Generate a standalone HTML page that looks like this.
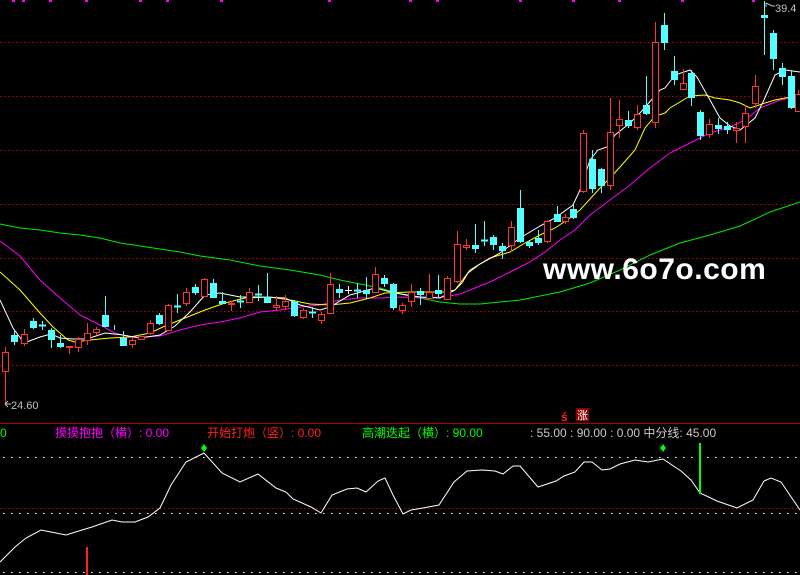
<!DOCTYPE html>
<html><head><meta charset="utf-8"><style>
html,body{margin:0;padding:0;background:#000;width:800px;height:575px;overflow:hidden}
svg{position:absolute;left:0;top:0}
.t{font-family:"Liberation Sans","Noto Sans CJK SC",sans-serif;font-size:12px}
</style></head><body>
<svg width="800" height="575" viewBox="0 0 800 575">
<g stroke="#c00000" stroke-width="1" stroke-dasharray="1.5 2.5">
<line x1="0" y1="42.5" x2="800" y2="42.5"/><line x1="0" y1="96.5" x2="800" y2="96.5"/>
<line x1="0" y1="150.5" x2="800" y2="150.5"/><line x1="0" y1="204.5" x2="800" y2="204.5"/>
<line x1="0" y1="258.5" x2="800" y2="258.5"/><line x1="0" y1="311.5" x2="800" y2="311.5"/>
<line x1="0" y1="365.5" x2="800" y2="365.5"/>
<line x1="0" y1="508.5" x2="800" y2="508.5"/>
</g>
<g stroke="#fff" stroke-width="1" stroke-dasharray="1.5 6.5">
<line x1="3" y1="457.5" x2="800" y2="457.5"/><line x1="3" y1="513.5" x2="800" y2="513.5"/><line x1="3" y1="572.5" x2="800" y2="572.5"/>
</g>
<line x1="0" y1="423.5" x2="800" y2="423.5" stroke="#b00000"/>
<g fill="#f0f">
<rect x="12" y="0" width="3" height="2"/><rect x="22" y="0" width="3" height="2"/><rect x="49" y="0" width="3" height="2"/><rect x="85" y="0" width="3" height="2"/><rect x="139" y="0" width="3" height="2"/><rect x="166" y="0" width="3" height="2"/><rect x="220" y="0" width="3" height="2"/><rect x="328" y="0" width="3" height="2"/><rect x="409" y="0" width="3" height="2"/><rect x="436" y="0" width="3" height="2"/><rect x="519" y="0" width="3" height="2"/><rect x="572" y="0" width="3" height="2"/><rect x="618" y="0" width="3" height="2"/><rect x="681" y="0" width="3" height="2"/><rect x="752" y="0" width="3" height="2"/>
</g>
<g fill="none" stroke-width="1">
<polyline stroke="#00ee00" points="0,224 20,228 40,230 60,233 80,235 100,238 120,243 140,246 160,249 180,252 200,256 230,260 260,266 290,270 320,275 340,280 360,284 380,288 400,294 420,298 440,302 460,304 480,304 520,300 560,292 590,283 620,270 650,255 680,243 710,235 740,226 770,212 800,202"/>
<polyline stroke="#ff00ff" points="0,241 20,256 40,280 60,298 80,315 100,325 115,333 130,337 145,337 160,336 180,330 200,325 220,322 240,318 260,312 280,310 300,307 320,305 340,300 360,298 380,298 400,297 420,298 445,297 460,294 470,290 490,282 510,272 530,262 545,252 560,240 575,230 590,215 610,200 630,185 650,168 670,153 690,143 710,133 730,127 745,120 760,108 780,100 800,96"/>
<polyline stroke="#ffff00" points="0,272 20,290 40,313 53,327 68,340 75,342 90,340 110,338 130,337 150,333 165,326 185,318 205,310 225,303 245,298 270,297 290,300 310,304 330,305 350,303 370,298 385,293 410,292 445,292 455,290 470,270 490,258 510,252 525,243 540,235 555,228 570,218 580,210 600,188 610,178 620,167 635,150 645,128 655,116 665,113 670,108 690,96 705,95 715,98 730,100 740,103 750,108 765,103 775,100 785,98 800,95"/>
<polyline stroke="#ffffff" points="0,300 13,328 24,343 40,337 51,334 60,338 73,339 87,339 105,333 123,335 140,338 160,335 175,326 190,312 205,295 220,293 240,297 260,297 285,298 300,305 320,310 330,307 350,295 375,288 395,293 420,297 440,298 455,290 462,283 468,273 480,264 500,253 520,238 540,226 555,218 573,205 580,190 590,160 598,150 607,147 615,135 630,123 640,113 660,90 665,88 675,75 690,70 697,77 710,100 720,118 730,126 740,130 755,118 763,102 775,75 785,70 800,72"/>
</g>
<g stroke-width="1">
<g stroke="#ff3333" fill="#000">
<line x1="5.5" y1="347" x2="5.5" y2="405"/><rect x="2.5" y="352.5" width="6" height="19"/>
<line x1="24.5" y1="329" x2="24.5" y2="346"/><rect x="21.5" y="334.5" width="6" height="9"/>
<line x1="69.5" y1="346" x2="69.5" y2="354"/><rect x="66.5" y="346.5" width="6" height="1"/>
<line x1="78.5" y1="337" x2="78.5" y2="352"/><rect x="75.5" y="339.5" width="6" height="8"/>
<line x1="87.5" y1="323" x2="87.5" y2="345"/><rect x="84.5" y="333.5" width="6" height="7"/>
<line x1="96.5" y1="327" x2="96.5" y2="335"/><rect x="93.5" y="329.5" width="6" height="3"/>
<line x1="132.5" y1="337" x2="132.5" y2="348"/><rect x="129.5" y="340.5" width="6" height="4"/>
<line x1="141.5" y1="336" x2="141.5" y2="340"/><rect x="138.5" y="336.5" width="6" height="3"/>
<line x1="150.5" y1="320" x2="150.5" y2="335"/><rect x="147.5" y="323.5" width="6" height="10"/>
<line x1="168.5" y1="304" x2="168.5" y2="331"/><rect x="165.5" y="305.5" width="6" height="25"/>
<line x1="186.5" y1="288" x2="186.5" y2="306"/><rect x="183.5" y="292.5" width="6" height="11"/>
<line x1="204.5" y1="278" x2="204.5" y2="297"/><rect x="201.5" y="279.5" width="6" height="17"/>
<line x1="231.5" y1="301" x2="231.5" y2="311"/><rect x="228.5" y="303.5" width="6" height="1"/>
<line x1="249.5" y1="288" x2="249.5" y2="303"/><rect x="246.5" y="292.5" width="6" height="10"/>
<line x1="276.5" y1="296" x2="276.5" y2="310"/><rect x="273.5" y="305.5" width="6" height="2"/>
<line x1="285.5" y1="295" x2="285.5" y2="310"/><rect x="282.5" y="301.5" width="6" height="5"/>
<line x1="303.5" y1="308" x2="303.5" y2="319"/><rect x="300.5" y="310.5" width="6" height="7"/>
<line x1="321.5" y1="312" x2="321.5" y2="324"/><rect x="318.5" y="314.5" width="6" height="6"/>
<line x1="330.5" y1="273" x2="330.5" y2="314"/><rect x="327.5" y="284.5" width="6" height="29"/>
<line x1="375.5" y1="267" x2="375.5" y2="293"/><rect x="372.5" y="274.5" width="6" height="18"/>
<line x1="402.5" y1="303" x2="402.5" y2="314"/><rect x="399.5" y="305.5" width="6" height="5"/>
<line x1="411.5" y1="284" x2="411.5" y2="307"/><rect x="408.5" y="292.5" width="6" height="9"/>
<line x1="429.5" y1="274" x2="429.5" y2="299"/><rect x="426.5" y="292.5" width="6" height="6"/>
<line x1="447.5" y1="276" x2="447.5" y2="300"/><rect x="444.5" y="278.5" width="6" height="21"/>
<line x1="457.5" y1="231" x2="457.5" y2="283"/><rect x="454.5" y="244.5" width="6" height="37"/>
<line x1="466.5" y1="239" x2="466.5" y2="250"/><rect x="463.5" y="245.5" width="6" height="2"/>
<line x1="511.5" y1="221" x2="511.5" y2="252"/><rect x="508.5" y="227.5" width="6" height="18"/>
<line x1="547.5" y1="220" x2="547.5" y2="243"/><rect x="544.5" y="221.5" width="6" height="20"/>
<line x1="565.5" y1="214" x2="565.5" y2="224"/><rect x="562.5" y="217.5" width="6" height="4"/>
<line x1="583.5" y1="130" x2="583.5" y2="193"/><rect x="580.5" y="133.5" width="6" height="58"/>
<line x1="610.5" y1="98" x2="610.5" y2="190"/><rect x="607.5" y="132.5" width="6" height="53"/>
<line x1="619.5" y1="100" x2="619.5" y2="138"/><rect x="616.5" y="119.5" width="6" height="6"/>
<line x1="637.5" y1="105" x2="637.5" y2="130"/><rect x="634.5" y="114.5" width="6" height="13"/>
<line x1="655.5" y1="22" x2="655.5" y2="128"/><rect x="652.5" y="42.5" width="6" height="80"/>
<line x1="683.5" y1="69" x2="683.5" y2="90"/><rect x="680.5" y="83.5" width="6" height="6"/>
<line x1="709.5" y1="119" x2="709.5" y2="138"/><rect x="706.5" y="124.5" width="6" height="10"/>
<line x1="736.5" y1="122" x2="736.5" y2="143"/><rect x="733.5" y="128.5" width="6" height="2"/>
<line x1="745.5" y1="105" x2="745.5" y2="143"/><rect x="742.5" y="113.5" width="6" height="13"/>
<line x1="755.5" y1="75" x2="755.5" y2="108"/><rect x="752.5" y="86.5" width="6" height="17"/>
<line x1="798.5" y1="90" x2="798.5" y2="112"/><rect x="795.5" y="94.5" width="6" height="17"/>
</g>
<g stroke="#55ffff" fill="#55ffff">
<line x1="14.5" y1="330" x2="14.5" y2="345"/><rect x="11.5" y="335.5" width="6" height="6"/>
<line x1="33.5" y1="318" x2="33.5" y2="329"/><rect x="30.5" y="321.5" width="6" height="6"/>
<line x1="42.5" y1="321" x2="42.5" y2="330"/><rect x="39.5" y="325" width="6" height="1"/>
<line x1="51.5" y1="328" x2="51.5" y2="348"/><rect x="48.5" y="330.5" width="6" height="9"/>
<line x1="60.5" y1="335" x2="60.5" y2="348"/><rect x="57.5" y="343.5" width="6" height="3"/>
<line x1="105.5" y1="296" x2="105.5" y2="327"/><rect x="102.5" y="315.5" width="6" height="11"/>
<line x1="114.5" y1="325" x2="114.5" y2="330"/>
<line x1="123.5" y1="331" x2="123.5" y2="346"/><rect x="120.5" y="338.5" width="6" height="7"/>
<line x1="159.5" y1="313" x2="159.5" y2="325"/><rect x="156.5" y="315.5" width="6" height="8"/>
<line x1="177.5" y1="294" x2="177.5" y2="313"/><rect x="174.5" y="306" width="6" height="1"/>
<line x1="195.5" y1="284" x2="195.5" y2="295"/><rect x="192.5" y="287.5" width="6" height="5"/>
<line x1="213.5" y1="279" x2="213.5" y2="298"/><rect x="210.5" y="283.5" width="6" height="14"/>
<line x1="222.5" y1="292" x2="222.5" y2="304"/><rect x="219.5" y="301.5" width="6" height="2"/>
<line x1="240.5" y1="295" x2="240.5" y2="308"/><rect x="237.5" y="301" width="6" height="1"/>
<line x1="258.5" y1="285" x2="258.5" y2="301"/><rect x="255.5" y="294" width="6" height="1"/>
<line x1="267.5" y1="273" x2="267.5" y2="302"/><rect x="264.5" y="297.5" width="6" height="5"/>
<line x1="294.5" y1="300" x2="294.5" y2="317"/><rect x="291.5" y="302.5" width="6" height="13"/>
<line x1="312.5" y1="307" x2="312.5" y2="318"/><rect x="309.5" y="312" width="6" height="1"/>
<line x1="339.5" y1="284" x2="339.5" y2="298"/><rect x="336.5" y="289.5" width="6" height="3"/>
<line x1="357.5" y1="283" x2="357.5" y2="298"/><rect x="354.5" y="290" width="6" height="1"/>
<line x1="366.5" y1="277" x2="366.5" y2="299"/><rect x="363.5" y="290.5" width="6" height="3"/>
<line x1="384.5" y1="275" x2="384.5" y2="287"/><rect x="381.5" y="278.5" width="6" height="5"/>
<line x1="393.5" y1="283" x2="393.5" y2="310"/><rect x="390.5" y="284.5" width="6" height="23"/>
<line x1="420.5" y1="288" x2="420.5" y2="305"/><rect x="417.5" y="291.5" width="6" height="3"/>
<line x1="438.5" y1="275" x2="438.5" y2="297"/><rect x="435.5" y="290.5" width="6" height="3"/>
<line x1="475.5" y1="224" x2="475.5" y2="253"/><rect x="472.5" y="245.5" width="6" height="3"/>
<line x1="484.5" y1="221" x2="484.5" y2="246"/><rect x="481.5" y="240" width="6" height="1"/>
<line x1="493.5" y1="235" x2="493.5" y2="250"/><rect x="490.5" y="237.5" width="6" height="7"/>
<line x1="502.5" y1="243" x2="502.5" y2="259"/><rect x="499.5" y="246.5" width="6" height="4"/>
<line x1="520.5" y1="190" x2="520.5" y2="243"/><rect x="517.5" y="208.5" width="6" height="33"/>
<line x1="529.5" y1="240" x2="529.5" y2="248"/><rect x="526.5" y="242.5" width="6" height="3"/>
<line x1="538.5" y1="230" x2="538.5" y2="245"/><rect x="535.5" y="238.5" width="6" height="4"/>
<line x1="557.5" y1="206" x2="557.5" y2="222"/><rect x="554.5" y="214.5" width="6" height="7"/>
<line x1="573.5" y1="204" x2="573.5" y2="219"/><rect x="570.5" y="209.5" width="6" height="8"/>
<line x1="592.5" y1="150" x2="592.5" y2="193"/><rect x="589.5" y="159.5" width="6" height="29"/>
<line x1="601.5" y1="168" x2="601.5" y2="193"/><rect x="598.5" y="169.5" width="6" height="16"/>
<line x1="628.5" y1="111" x2="628.5" y2="128"/><rect x="625.5" y="120.5" width="6" height="5"/>
<line x1="646.5" y1="76" x2="646.5" y2="115"/><rect x="643.5" y="105.5" width="6" height="8"/>
<line x1="664.5" y1="13" x2="664.5" y2="50"/><rect x="661.5" y="25.5" width="6" height="17"/>
<line x1="674.5" y1="56" x2="674.5" y2="85"/><rect x="671.5" y="71.5" width="6" height="8"/>
<line x1="691.5" y1="70" x2="691.5" y2="106"/><rect x="688.5" y="73.5" width="6" height="24"/>
<line x1="700.5" y1="110" x2="700.5" y2="140"/><rect x="697.5" y="112.5" width="6" height="23"/>
<line x1="718.5" y1="118" x2="718.5" y2="134"/><rect x="715.5" y="125.5" width="6" height="3"/>
<line x1="727.5" y1="122" x2="727.5" y2="134"/><rect x="724.5" y="126.5" width="6" height="3"/>
<line x1="764.5" y1="1" x2="764.5" y2="55"/><rect x="761.5" y="15.5" width="6" height="2"/>
<line x1="773.5" y1="30" x2="773.5" y2="70"/><rect x="770.5" y="33.5" width="6" height="25"/>
<line x1="782.5" y1="63" x2="782.5" y2="85"/><rect x="779.5" y="68.5" width="6" height="8"/>
<line x1="791.5" y1="70" x2="791.5" y2="109"/><rect x="788.5" y="76.5" width="6" height="31"/>
</g>
<line x1="348.5" y1="286" x2="348.5" y2="294" stroke="#fff"/><line x1="345" y1="290.5" x2="352" y2="290.5" stroke="#fff"/>
</g>
<g fill="#c0c0c0" class="t">
<text x="11" y="409" font-size="11">24.60</text>
<text x="775" y="12" font-size="11">39.4</text>
</g>
<path d="M11 404 H6 M8 401 L5 404 L8 407" stroke="#c0c0c0" fill="none"/>
<path d="M766 3 V7 M766 3 L772 6 H775" stroke="#c0c0c0" fill="none"/>
<text x="543" y="279" fill="#fff" font-family="Liberation Sans, sans-serif" font-weight="bold" font-size="30" letter-spacing="0.5">www.6o7o.com</text>
<text x="561" y="421" fill="#ff2020" font-family="Liberation Sans, sans-serif" font-weight="bold" font-size="12">ś</text>
<rect x="576" y="408" width="13" height="13" fill="#8b0000"/>
<text x="577" y="419" fill="#fff" font-family="Noto Sans CJK SC, sans-serif" font-size="11">涨</text>
<g class="t">
<text x="0" y="437" fill="#00ff00">0</text>
<text x="55" y="437" fill="#ff00ff">摸摸抱抱（横）: 0.00</text>
<text x="207" y="437" fill="#ff2020">开始打炮（竖）: 0.00</text>
<text x="362" y="437" fill="#00ff00">高潮迭起（横）: 90.00</text>
<text x="530" y="437" fill="#c8c8c8">: 55.00 : 90.00 : 0.00 中分线: 45.00</text>
</g>
<polyline fill="none" stroke="#fff" stroke-width="1" points="0,562 15,547 26,538 41,530 51,532 66,535 82,530 92,527 112,520 122,522 135,522 148,517 160,508 171,485 186,462 204,453 222,473 240,482 258,474 276,488 286,492 293,499 311,507 321,513 332,495 347,489 357,488 366,492 378,481 385,478 393,495 403,514 411,510 423,508 439,505 454,482 467,471 482,470 495,471 503,474 513,466 520,466 538,487 556,481 564,476 575,472 584,462 592,462 602,470 610,469 620,464 635,460 648,462 663,459 681,471 691,480 700,493 717,501 737,508 753,500 764,481 771,478 781,482 800,510"/>
<path d="M204 444 L207 448 L204 452 L201 448Z M663 444 L666 448 L663 452 L660 448Z" fill="#00ff00"/>
<rect x="699" y="443" width="2" height="51" fill="#00ff00"/>
<rect x="86" y="547" width="2" height="28" fill="#ff2020"/>
</svg>
</body></html>
